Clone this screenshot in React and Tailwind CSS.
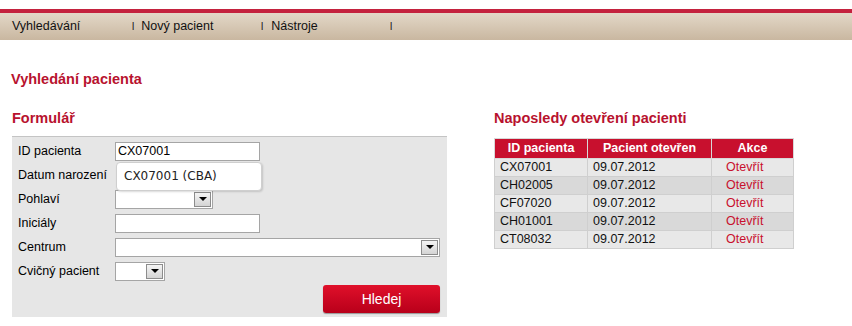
const recent = [
  { id: 'CX07001', date: '09.07.2012' },
  { id: 'CH02005', date: '09.07.2012' },
  { id: 'CF07020', date: '09.07.2012' },
  { id: 'CH01001', date: '09.07.2012' },
  { id: 'CT08032', date: '09.07.2012' }
];

function SelectBox({ className }) {
  return (
    <div className={`flex h-[19px] items-stretch border border-[#a5a5a5] bg-white ${className}`}>
      <div className="flex-1" />
      <div className="my-[1px] mr-[1px] flex w-[17px] items-center justify-center border border-[#8c8c8c] bg-gradient-to-b from-[#f4f4f4] to-[#d4d4d4]">
        <span className="h-0 w-0 border-x-[4px] border-t-[4px] border-x-transparent border-t-black" />
      </div>
    </div>
  );
}

function Row({ label, children }) {
  return (
    <div className="flex h-[24px] items-center">
      <span className="w-[103px] pl-[6px] text-[12.5px] text-black">{label}</span>
      {children}
    </div>
  );
}

function App() {
  return (
    <div className="h-[326px] w-[852px] bg-white font-['Liberation_Sans',Arial,sans-serif]">
      <div className="h-[9px]" />
      <div className="h-[4px] bg-[#c4223e] shadow-[0_1px_1px_#e8a0ac]" />
      <nav className="flex h-[27px] items-center bg-gradient-to-b from-[#e3d8c8] to-[#c9b7a0] text-[12.5px] text-[#111]">
        <span className="w-[120px] pl-[12px]">Vyhledávání</span>
        <span className="w-[130px] pl-[12px]"><span className="mr-[7px] text-[10px]">l</span>Nový pacient</span>
        <span className="w-[130px] pl-[11px]"><span className="mr-[8px] text-[10px]">l</span>Nástroje</span>
        <span className="pl-[10px] text-[10px]">l</span>
      </nav>

      <h1 className="mt-[30px] pl-[11px] text-[14.5px] font-bold leading-[18px] text-[#b8122e]">Vyhledání pacienta</h1>

      <div className="mt-[22px] flex">
        <div className="ml-[12px] w-[435px]">
          <h2 className="text-[14.5px] font-bold leading-[17px] text-[#b8122e]">Formulář</h2>
          <div className="mt-[9px] border-t border-[#c4c4c4] bg-[#e6e6e6] pt-[2px] pb-[4px]">
            <Row label="ID pacienta">
              <div className="flex h-[19px] w-[145px] items-center border border-[#a5a5a5] bg-white pl-[2px] text-[12.5px]">CX07001</div>
            </Row>
            <Row label="Datum narození">
              <div className="relative h-[19px] w-[145px]">
                <div className="absolute -top-[4px] left-[1px] flex h-[29px] w-[146px] items-center rounded-[4px] border border-[#cfcfcf] bg-white pl-[7px] font-['DejaVu_Sans',sans-serif] text-[12px] text-[#222] shadow-[1px_1px_2px_rgba(0,0,0,0.15)]">
                  CX07001 (CBA)
                </div>
              </div>
            </Row>
            <Row label="Pohlaví">
              <SelectBox className="w-[98px]" />
            </Row>
            <Row label="Iniciály">
              <div className="h-[19px] w-[145px] border border-[#a5a5a5] bg-white" />
            </Row>
            <Row label="Centrum">
              <SelectBox className="w-[325px]" />
            </Row>
            <Row label="Cvičný pacient">
              <SelectBox className="w-[50px]" />
            </Row>
            <div className="flex justify-end pr-[7px] pt-[2px]">
              <button className="h-[28px] w-[117px] rounded-[3px] bg-gradient-to-b from-[#e0102a] to-[#b8001a] text-[14px] text-white shadow-[0_1px_1px_rgba(0,0,0,0.35)]">
                Hledej
              </button>
            </div>
          </div>
        </div>

        <div className="ml-[47px] w-[300px]">
          <h2 className="text-[14.5px] font-bold leading-[17px] text-[#b8122e]">Naposledy otevření pacienti</h2>
          <table className="mt-[11px] w-[300px] border-collapse text-[12.5px]">
            <thead>
              <tr className="h-[17px] bg-[#c8102e] font-bold text-white">
                <th className="w-[93px] border border-[#d8d8d8] text-center">ID pacienta</th>
                <th className="w-[124px] border border-[#d8d8d8] text-center">Pacient otevřen</th>
                <th className="border border-[#d8d8d8] text-center">Akce</th>
              </tr>
            </thead>
            <tbody>
              {recent.map((r, i) => (
                <tr key={r.id} className={`h-[18px] ${i % 2 === 0 ? 'bg-[#e8e8e8]' : 'bg-[#d9d9d9]'}`}>
                  <td className="border border-[#cfcfcf] pl-[5px] leading-[16px] text-[#111]">{r.id}</td>
                  <td className="border border-[#cfcfcf] pl-[5px] leading-[16px] text-[#111]">{r.date}</td>
                  <td className="border border-[#cfcfcf] pl-[14px] leading-[16px] text-[#c8102e]">Otevřít</td>
                </tr>
              ))}
            </tbody>
          </table>
        </div>
      </div>
    </div>
  );
}

export default App;
